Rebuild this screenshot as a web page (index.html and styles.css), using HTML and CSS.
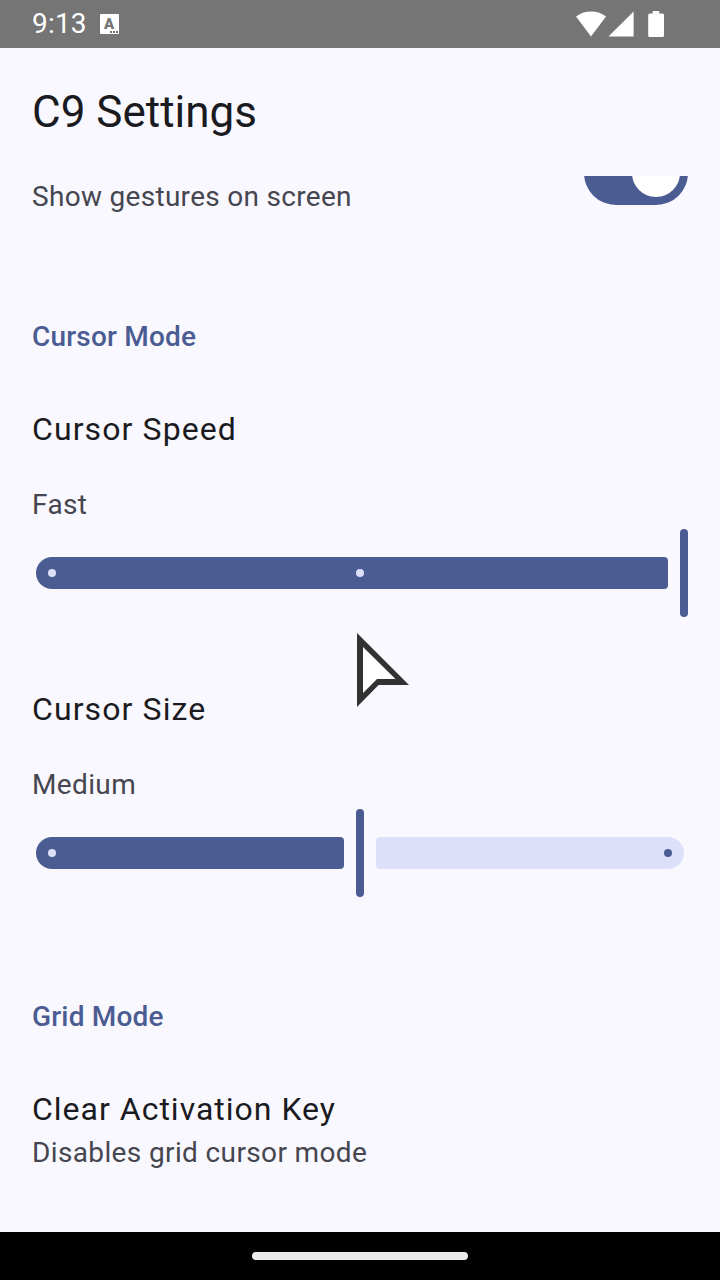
FILE: index.html
```html
<!DOCTYPE html>
<html lang="en">
<head>
<meta charset="utf-8">
<title>C9 Settings</title>
<link rel="stylesheet" href="styles.css">
</head>
<body>
<div class="screen">
  <header class="status-bar">
    <span class="clock">9:13</span>
    <span class="keyboard-badge"><span class="badge-letter">A</span><svg class="badge-dots" width="9" height="2" viewBox="0 0 9 2"><path d="M0 0h2v2H0zM3 0h2v2H3zM6 0h2v2H6z" fill="#757575"/></svg></span>
    <svg class="status-icons" width="90" height="28" viewBox="0 0 90 28" fill="#fff">
      <path d="M0 6.5C4 3.3 9 1.4 15 1.4S26 3.3 30 6.5L15 26.5Z"/>
      <path d="M32.500 26.600L57.600 1.600V26.600Z"/>
      <path d="M76.700 1h6.500v2.500h3.300Q88 3.500 88 5V25.500Q88 27 86.500 27H73.700Q72.200 27 72.200 25.500V5Q72.200 3.500 73.700 3.500H76.700Z"/>
    </svg>
  </header>
  <div class="title-bar"><h1 class="title">C9 Settings</h1></div>
  <main class="content">
    <div class="gesture-row">
      <span class="secondary gesture-label">Show gestures on screen</span>
      <span class="switch"><span class="switch-thumb"></span></span>
    </div>
    <h2 class="section">Cursor Mode</h2>
    <section class="setting">
      <div class="primary">Cursor Speed</div>
      <div class="secondary value">Fast</div>
      <div class="slider">
        <div class="track active full"><i class="tick"></i><i class="tick"></i><i class="tick-space"></i></div>
        <div class="handle"></div>
      </div>
    </section>
    <section class="setting">
      <div class="primary">Cursor Size</div>
      <div class="secondary value">Medium</div>
      <div class="slider">
        <div class="track active"><i class="tick"></i></div>
        <div class="handle"></div>
        <div class="track inactive"><i class="tick"></i></div>
      </div>
    </section>
    <h2 class="section">Grid Mode</h2>
    <section class="setting">
      <div class="primary key-label">Clear Activation Key</div>
      <div class="secondary">Disables grid cursor mode</div>
    </section>
  </main>
  <footer class="nav-bar"><div class="home-pill"></div></footer>
  <svg class="pointer" width="54" height="76" viewBox="0 0 54 76">
    <path d="M2 1V75L23.600 53H54Z" fill="#323232"/>
    <path d="M8 15V61L22 47H40.500Z" fill="#fff"/>
  </svg>
</div>
</body>
</html>
```

FILE: styles.css
```css
* { box-sizing: border-box; }
body { margin: 0; font-family: Roboto, sans-serif; color: #1a1b21; }
.screen {
  position: relative;
  display: flex;
  flex-direction: column;
  width: 720px;
  height: 1280px;
  overflow: hidden;
  background: #faf8ff;
}
.status-bar {
  display: flex;
  align-items: center;
  height: 48px;
  padding: 0 54px 0 32px;
  background: #757575;
  color: #fff;
}
.clock { width: 68px; font-size: 28px; line-height: 48px; letter-spacing: 0.2px; }
.keyboard-badge {
  position: relative;
  width: 19px;
  height: 20px;
  margin-left: -0.5px;
  border-radius: 1px;
  background: #fff;
  color: #757575;
  text-align: center;
}
.badge-letter { display: block; font-size: 15px; font-weight: 900; line-height: 20px; }
.badge-dots { position: absolute; left: 10px; bottom: 1px; }
.status-icons { margin-left: auto; }
.title-bar { display: flex; align-items: center; height: 128px; padding: 0 32px; }
.title { margin: 0; font-size: 44px; font-weight: 400; line-height: 56px; }
.content { flex: 1; padding: 0 32px; overflow: hidden; }
.gesture-row { display: flex; justify-content: space-between; align-items: flex-start; height: 40px; }
.primary { font-size: 32px; line-height: 48px; letter-spacing: 1.1px; }
.key-label { letter-spacing: 1px; }
.secondary { font-size: 28px; line-height: 40px; letter-spacing: 0.37px; color: #45464f; }
.gesture-label { padding-top: 1px; letter-spacing: 0.3px; }
.switch {
  display: flex;
  justify-content: flex-end;
  width: 104px;
  height: 64px;
  margin-top: -35px;
  padding: 8px;
  border-radius: 32px;
  background: #4a5c92;
}
.switch-thumb { width: 48px; height: 48px; border-radius: 50%; background: #fff; }
.section {
  margin: 101px 0 48px;
  font-size: 28px;
  font-weight: 500;
  line-height: 40px;
  letter-spacing: 0.2px;
  color: #4a5c92;
}
.setting + .section { margin-top: 100px; }
.value { margin-top: 32px; }
.slider { display: flex; align-items: center; gap: 12px; height: 88px; margin-top: 4px; padding: 0 4px; }
.setting + .setting { margin-top: 68px; }
.track { display: flex; flex: 1; align-items: center; justify-content: space-between; height: 32px; padding: 0 12px; }
.active { border-radius: 16px 4px 4px 16px; background: #4a5c92; }
.inactive { justify-content: flex-end; border-radius: 4px 16px 16px 4px; background: #dce1f9; }
.full { flex: 0 0 632px; padding-right: 0; }
.tick-space { width: 8px; margin-right: -4px; }
.tick { width: 8px; height: 8px; border-radius: 50%; background: #dce1f9; }
.inactive .tick { background: #4a5c92; }
.handle { flex: none; width: 8px; height: 88px; border-radius: 4px; background: #4a5c92; }
.nav-bar { display: flex; align-items: center; justify-content: center; height: 48px; background: #000; }
.home-pill { width: 216px; height: 8px; border-radius: 4px; background: #ebebeb; }
.pointer { position: absolute; left: 355px; top: 632px; }
```
